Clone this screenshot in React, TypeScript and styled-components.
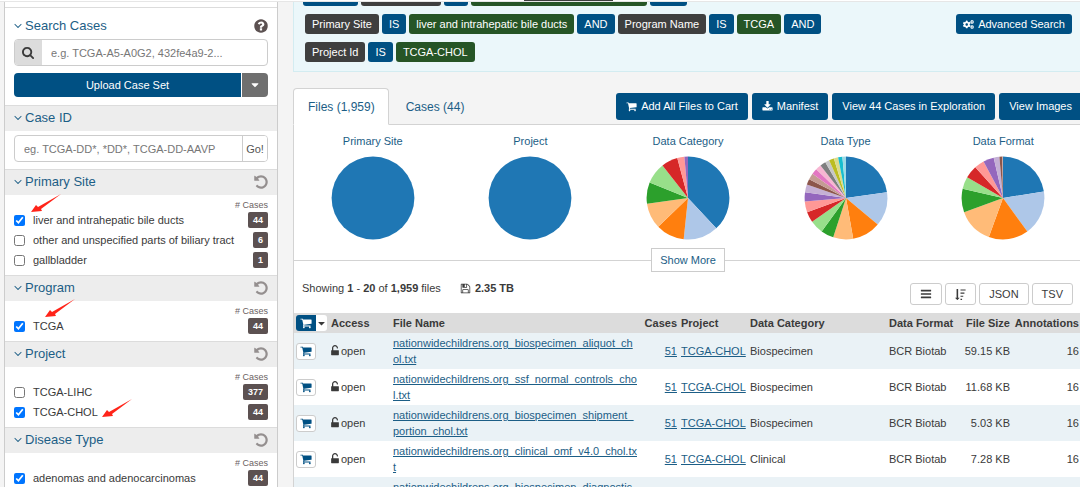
import React from "react";
import styled, { createGlobalStyle, css } from "styled-components";
import { FaCogs } from "react-icons/fa";

const GlobalStyle = createGlobalStyle`
  *, *::before, *::after { box-sizing: border-box; }
  body {
    margin: 0;
    background: #f4f4f4;
    color: #3a3a3a;
    font-family: "Liberation Sans", Arial, sans-serif;
    font-size: 11px;
    line-height: 16px;
  }
  button, input { font: inherit; color: inherit; }
  a { color: #1c5e86; }
`;

const blue = "#005083";
const linkBlue = "#1c5e86";

/* ---------- icons ---------- */

const paths = {
  search:
    "M1152 832q0-185-131.5-316.5t-316.5-131.5-316.5 131.5-131.5 316.5 131.5 316.5 316.5 131.5 316.5-131.5 131.5-316.5zm512 832q0 54-38 91t-90 37q-54 0-90-38l-343-342q-179 124-399 124-143 0-273.5-55.5t-225-150-150-225-55.5-273.5 55.5-273.5 150-225 225-150 273.5-55.5 273.5 55.5 225 150 150 225 55.5 273.5q0 220-124 399l343 343q37 37 37 90z",
  angleDown:
    "M1395 736q0 13-10 23l-466 466q-10 10-23 10t-23-10l-466-466q-10-10-10-23t10-23l50-50q10-10 23-10t23 10l393 393 393-393q10-10 23-10t23 10l50 50q10 10 10 23z",
  question:
    "M1024 1376v-192q0-14-9-23t-23-9h-192q-14 0-23 9t-9 23v192q0 14 9 23t23 9h192q14 0 23-9t9-23zm256-672q0-88-55.5-163t-138.5-116-170-41q-243 0-371 213-15 24 8 42l132 100q7 6 19 6 16 0 25-12 53-68 86-92 34-24 86-24 48 0 85.5 26t37.5 59q0 38-20 61t-68 45q-63 28-115.5 86.5t-52.5 125.5v36q0 14 9 23t23 9h192q14 0 23-9t9-23q0-19 21.5-49.5t54.5-49.5q32-18 49-28.5t46-35 44.5-48 28-60.5 12.5-81zm384 192q0 209-103 385.5t-279.5 279.5-385.5 103-385.5-103-279.5-279.5-103-385.5 103-385.5 279.5-279.5 385.5-103 385.5 103 279.5 279.5 103 385.5z",
  undo:
    "M1664 896q0 156-61 298t-164 245-245 164-298 61q-172 0-327-72.5t-264-204.5q-7-10-6.5-22.5t8.5-20.5l137-138q10-9 25-9 16 2 23 12 73 95 179 147t225 52q104 0 198.5-40.5t163.5-109.5 109.5-163.5 40.5-198.5-40.5-198.5-109.5-163.5-163.5-109.5-198.5-40.5q-98 0-188 35.5t-160 101.5l137 138q31 30 14 69-17 40-59 40h-448q-26 0-45-19t-19-45v-448q0-42 40-59 39-17 69 14l130 129q107-101 244.5-156.5t284.5-55.5q156 0 298 61t245 164 164 245 61 298z",
  cart:
    "M704 1536q0 52-38 90t-90 38-90-38-38-90 38-90 90-38 90 38 38 90zm896 0q0 52-38 90t-90 38-90-38-38-90 38-90 90-38 90 38 38 90zm128-1088v512q0 24-16.5 42.5t-40.5 21.5l-1044 122q13 60 13 70 0 16-24 64h920q26 0 45 19t19 45-19 45-45 19h-1024q-26 0-45-19t-19-45q0-11 8-31.5t16-36 21.5-40 15.5-29.5l-177-823h-204q-26 0-45-19t-19-45 19-45 45-19h256q16 0 28.5 6.5t19.5 15.5 13 24.5 8 26 5.5 29.5 4.5 26h1201q26 0 45 19t19 45z",
  download:
    "M1344 1344q0-26-19-45t-45-19-45 19-19 45 19 45 45 19 45-19 19-45zm256 0q0-26-19-45t-45-19-45 19-19 45 19 45 45 19 45-19 19-45zm128-224v320q0 40-28 68t-68 28h-1472q-40 0-68-28t-28-68v-320q0-40 28-68t68-28h465l135 136q58 56 136 56t136-56l136-136h464q40 0 68 28t28 68zm-325-569q17 41-14 70l-448 448q-18 19-45 19t-45-19l-448-448q-31-29-14-70 17-39 59-39h256v-448q0-26 19-45t45-19h256q26 0 45 19t19 45v448h256q42 0 59 39z",
  save:
    "M512 1536h768v-384h-768v384zm896 0h128v-896q0-14-10-38.5t-20-34.5l-281-281q-10-10-34-20t-39-10v416q0 40-28 68t-68 28h-576q-40 0-68-28t-28-68v-416h-128v1280h128v-416q0-40 28-68t68-28h832q40 0 68 28t28 68v416zm-384-928v-320q0-13-9.5-22.5t-22.5-9.5h-192q-13 0-22.5 9.5t-9.5 22.5v320q0 13 9.5 22.5t22.5 9.5h192q13 0 22.5-9.5t9.5-22.5zm640 32v928q0 40-28 68t-68 28h-1344q-40 0-68-28t-28-68v-1344q0-40 28-68t68-28h928q40 0 88 20t76 48l280 280q28 28 48 76t20 88z",
  bars:
    "M1664 1344v128q0 26-19 45t-45 19h-1408q-26 0-45-19t-19-45v-128q0-26 19-45t45-19h1408q26 0 45 19t19 45zm0-512v128q0 26-19 45t-45 19h-1408q-26 0-45-19t-19-45v-128q0-26 19-45t45-19h1408q26 0 45 19t19 45zm0-512v128q0 26-19 45t-45 19h-1408q-26 0-45-19t-19-45v-128q0-26 19-45t45-19h1408q26 0 45 19t19 45z",
  unlock:
    "M1376 768q40 0 68 28t28 68v576q0 40-28 68t-68 28h-960q-40 0-68-28t-28-68v-576q0-40 28-68t68-28h32v-320q0-185 131.5-316.5t316.5-131.5 316.5 131.5 131.5 316.5q0 26-19 45t-45 19h-64q-26 0-45-19t-19-45q0-106-75-181t-181-75-181 75-75 181v320h736z",
  caret:
    "M1408 704q0 26-19 45l-448 448q-19 19-45 19t-45-19l-448-448q-19-19-19-45t19-45 45-19h896q26 0 45 19t19 45z",
  sortDesc:
    "M736 1440q0 12-10 24l-319 319q-10 9-23 9-12 0-23-9l-320-320q-15-16-7-35 8-20 30-20h192v-1376q0-14 9-23t23-9h192q14 0 23 9t9 23v1376h192q14 0 23 9t9 23zM896 1600h256v192h-256zM896 1088h448v192h-448zM896 576h640v192h-640zM896 64h832v192h-832z",
};

const Svg = styled.svg`
  display: block;
  flex: none;
  fill: currentColor;
`;

type IconProps = { name: keyof typeof paths; size?: number; width?: number; viewBox?: string };

const Icon = ({ name, size = 12, width = size, viewBox = "0 0 1792 1792" }: IconProps) => (
  <Svg width={width} height={size} viewBox={viewBox} aria-hidden="true">
    <path d={paths[name]} />
  </Svg>
);

/* ---------- page frame ---------- */

const Page = styled.div`
  display: flex;
  flex-direction: column;
  height: 100vh;
  overflow: hidden;
`;

const TopEdge = styled.header`
  position: relative;
  flex: none;
  height: 2px;
  background: #fff;
  border-bottom: 1px solid #e6e6e6;
`;

const TopNotch = styled.div`
  position: absolute;
  left: 524px;
  top: -1px;
  width: 89px;
  height: 2px;
  background: #3c3c3c;
`;

const Columns = styled.div`
  display: flex;
  flex: 1;
  gap: 15px;
  padding-left: 4px;
  margin-right: -2px;
  min-height: 0;
`;

/* ---------- sidebar ---------- */

const Sidebar = styled.aside`
  flex: none;
  width: 274px;
  background: #fff;
  border: solid #ccc;
  border-width: 0 1px;
`;

const SearchSection = styled.section`
  margin-top: 5px;
  padding: 5px 9px 8px;
  border-top: 1px solid #dcdcdc;
`;

const FacetHead = styled.div<{ $plain?: boolean }>`
  display: flex;
  align-items: center;
  justify-content: space-between;
  height: 26px;
  color: #948f8f;
  ${(p) =>
    !p.$plain &&
    css`
      padding: 0 9px 1px;
      background: #ededed;
      border-top: 1px solid #dcdcdc;
    `}
`;

const FacetTitle = styled.h2`
  display: flex;
  align-items: center;
  gap: 3px;
  margin: 0;
  color: ${linkBlue};
  font-size: 13px;
  font-weight: 400;
`;

const IconButton = styled.button<{ $dark?: boolean }>`
  padding: 0;
  border: 0;
  background: none;
  color: ${(p) => (p.$dark ? "#5c5151" : "#948f8f")};
`;

const InputGroup = styled.div`
  display: flex;
  height: 27px;
  border: 1px solid #ccc;
  border-radius: 4px;
  background: #fff;
  overflow: hidden;
`;

const InputAddon = styled.label`
  display: flex;
  align-items: center;
  justify-content: center;
  width: 27px;
  background: #dcdcdc;
`;

const TextInput = styled.input`
  flex: 1;
  min-width: 0;
  padding: 0 9px;
  border: 0;
  background: none;
  &::placeholder {
    color: #777;
    opacity: 1;
  }
`;

const GoButton = styled.button`
  width: 25px;
  padding: 0;
  border: 0;
  border-left: 1px solid #ccc;
  background: #fff;
  color: #555;
`;

const UploadRow = styled.div`
  display: flex;
  gap: 1px;
  height: 24px;
  margin-top: 7px;
`;

const UploadButton = styled.button`
  flex: 1;
  padding: 0;
  border: 0;
  border-radius: 4px 0 0 4px;
  background: ${blue};
  color: #fff;
`;

const UploadMenu = styled.button`
  display: flex;
  align-items: center;
  justify-content: center;
  width: 26px;
  padding: 0;
  border: 0;
  border-radius: 0 4px 4px 0;
  background: #6f6f6f;
  color: #fff;
`;

const CaseIdBody = styled.div`
  padding: 4px 9px 7px;
`;

const FacetBody = styled.div`
  padding: 4px 9px 5px;
`;

const CasesLabel = styled.div`
  height: 11px;
  color: #6b6262;
  font-size: 9px;
  line-height: 12px;
  text-align: right;
`;

const FacetRow = styled.div`
  position: relative;
  display: flex;
  align-items: center;
  justify-content: space-between;
  height: 20px;
`;

const FacetOption = styled.label`
  display: flex;
  align-items: center;
  gap: 8px;
`;

const Checkbox = styled.input`
  width: 11px;
  height: 11px;
  margin: 0;
`;

const Badge = styled.span`
  padding: 0 5px;
  border-radius: 2px;
  background: #5c5151;
  color: #fff;
  font-size: 9px;
  font-weight: 700;
`;

const Arrow = styled.svg<{ $x: number; $y: number }>`
  position: absolute;
  left: ${(p) => p.$x}px;
  top: ${(p) => p.$y}px;
  pointer-events: none;
`;

type Option = { label: string; count: number; checked?: boolean; arrow?: [number, number] };

const facets: { title: string; options: Option[] }[] = [
  {
    title: "Primary Site",
    options: [
      { label: "liver and intrahepatic bile ducts", count: 44, checked: true, arrow: [16, -17] },
      { label: "other and unspecified parts of biliary tract", count: 6 },
      { label: "gallbladder", count: 1 },
    ],
  },
  { title: "Program", options: [{ label: "TCGA", count: 44, checked: true, arrow: [30, -18] }] },
  {
    title: "Project",
    options: [
      { label: "TCGA-LIHC", count: 377 },
      { label: "TCGA-CHOL", count: 44, checked: true, arrow: [87, -4] },
    ],
  },
  {
    title: "Disease Type",
    options: [{ label: "adenomas and adenocarcinomas", count: 44, checked: true }],
  },
];

const Title = ({ children }: { children: React.ReactNode }) => (
  <FacetTitle>
    <Icon name="angleDown" size={8} viewBox="346 400 1100 1100" />
    {children}
  </FacetTitle>
);

const Facet = ({ title, options }: { title: string; options: Option[] }) => (
  <section>
    <FacetHead>
      <Title>{title}</Title>
      <IconButton aria-label={`Reset ${title}`}>
        <Icon name="undo" size={14} viewBox="100 100 1592 1592" />
      </IconButton>
    </FacetHead>
    <FacetBody>
      <CasesLabel># Cases</CasesLabel>
      {options.map((o) => (
        <FacetRow key={o.label}>
          <FacetOption>
            <Checkbox type="checkbox" defaultChecked={o.checked} />
            {o.label}
          </FacetOption>
          <Badge>{o.count}</Badge>
          {o.arrow && (
            <Arrow $x={o.arrow[0]} $y={o.arrow[1]} width="32" height="20" aria-hidden="true">
              <path d="M1 19 L6 12 L8 14 L31 1 L11 16 L12 18 Z" fill="#ff2419" />
            </Arrow>
          )}
        </FacetRow>
      ))}
    </FacetBody>
  </section>
);

/* ---------- query bar ---------- */

const Main = styled.main`
  flex: 1;
  min-width: 0;
`;

const Query = styled.section`
  display: flex;
  justify-content: space-between;
  align-items: flex-start;
  padding: 0 10px 9px 11px;
  background: #ebf7fa;
  border: solid #d3ecf1;
  border-width: 0 0 1px 1px;
`;

const QueryRows = styled.div`
  display: flex;
  flex-direction: column;
  gap: 8px;
`;

const QueryRow = styled.div<{ $cut?: boolean }>`
  display: flex;
  gap: 3px;
  ${(p) =>
    p.$cut &&
    css`
      align-items: flex-end;
      height: 4px;
      margin-left: -2px;
      overflow: hidden;
    `}
`;

const tagColors = { field: "#3f3f3f", op: blue, value: "#265526" };

const Tag = styled.span<{ $kind: keyof typeof tagColors; $width?: number }>`
  flex: none;
  height: 20px;
  width: ${(p) => (p.$width ? `${p.$width}px` : "auto")};
  padding: 0 7px;
  border-radius: 3px;
  background: ${(p) => tagColors[p.$kind]};
  color: #fff;
  line-height: 20px;
  white-space: nowrap;
`;

const AdvancedSearch = styled.button`
  display: flex;
  align-items: center;
  gap: 4px;
  height: 20px;
  margin-top: 12px;
  padding: 0 7px;
  border: 0;
  border-radius: 3px;
  background: ${blue};
  color: #fff;
  white-space: nowrap;
`;

/* ---------- tabs ---------- */

const TabBar = styled.div`
  display: flex;
  justify-content: space-between;
  margin-top: 16px;
`;

const Tabs = styled.nav`
  display: flex;
`;

const Tab = styled.a<{ $active?: boolean }>`
  height: 37px;
  margin-bottom: -1px;
  padding: 0 16px;
  border: 1px solid transparent;
  border-radius: 4px 4px 0 0;
  color: ${linkBlue};
  font-size: 12px;
  line-height: 36px;
  text-decoration: none;
  white-space: nowrap;
  ${(p) =>
    p.$active &&
    css`
      position: relative;
      padding: 0 13px 0 14px;
      background: #fff;
      border-color: #d3d3d3;
      border-bottom-color: #fff;
    `}
`;

const Actions = styled.div`
  display: flex;
  align-items: center;
  gap: 4px;
`;

const ActionButton = styled.button`
  display: flex;
  align-items: center;
  gap: 4px;
  height: 27px;
  padding: 0 10px;
  border: 0;
  border-radius: 3px;
  background: ${blue};
  color: #fff;
  white-space: nowrap;
`;

/* ---------- charts ---------- */

const Panel = styled.section`
  background: #fff;
  border: solid #d3d3d3;
  border-width: 1px 0 0 1px;
`;

const Charts = styled.div`
  display: grid;
  grid-template-columns: repeat(5, 1fr);
  padding-top: 8px;
`;

const Chart = styled.figure`
  display: flex;
  flex-direction: column;
  align-items: center;
  gap: 7px;
  margin: 0;
  color: ${linkBlue};
`;

const palette = [
  "#1f77b4", "#aec7e8", "#ff7f0e", "#ffbb78", "#2ca02c", "#98df8a", "#d62728", "#ff9896",
  "#9467bd", "#c5b0d5", "#8c564b", "#c49c94", "#e377c2", "#f7b6d2", "#7f7f7f", "#c7c7c7",
  "#bcbd22", "#dbdb8d", "#17becf", "#9edae5",
];

/* Each pie lists the angle, clockwise from the top, at which every slice ends. */
const pies: { title: string; ends: number[] }[] = [
  { title: "Primary Site", ends: [360] },
  { title: "Project", ends: [360] },
  { title: "Data Category", ends: [137, 186, 226, 262, 292, 322, 345, 355, 360] },
  {
    title: "Data Type",
    ends: [82, 130, 170, 198, 216, 235, 250, 265, 278, 289, 297, 306, 314, 322, 330, 336, 343, 349, 355, 360],
  },
  { title: "Data Format", ends: [81, 144, 200, 250, 283, 300, 318, 332, 347, 355, 359, 360] },
];

const R = 41.4;
const point = (deg: number) => {
  const a = (deg * Math.PI) / 180;
  return `${42 + R * Math.sin(a)} ${42 - R * Math.cos(a)}`;
};

const Pie = ({ ends }: { ends: number[] }) => (
  <svg width="84" height="84" viewBox="0 0 84 84" aria-hidden="true">
    {ends.length === 1 ? (
      <circle cx="42" cy="42" r={R} fill={palette[0]} />
    ) : (
      ends.map((end, i) => {
        const start = i ? ends[i - 1] : 0;
        return (
          <path
            key={end}
            d={`M42 42 L${point(start)} A${R} ${R} 0 ${end - start > 180 ? 1 : 0} 1 ${point(end)} Z`}
            fill={palette[i]}
          />
        );
      })
    )}
  </svg>
);

const MoreDivider = styled.div`
  display: flex;
  align-items: center;
  margin-top: 8px;
  &::before,
  &::after {
    content: "";
    flex: 1;
    height: 1px;
    background: #d3d3d3;
  }
`;

const ShowMore = styled.button`
  height: 24px;
  padding: 0 8px;
  border: 1px solid #ccc;
  background: #fff;
  color: ${linkBlue};
`;

/* ---------- table ---------- */

const TableBar = styled.div`
  display: flex;
  justify-content: space-between;
  align-items: flex-start;
  padding: 8px 9px 8px 8px;
`;

const Summary = styled.div`
  display: flex;
  align-items: center;
  gap: 19px;
`;

const Size = styled.strong`
  display: flex;
  align-items: center;
  gap: 4px;
`;

const Tools = styled.div`
  display: flex;
  gap: 3px;
  padding-top: 3px;
`;

const ToolButton = styled.button`
  display: flex;
  align-items: center;
  justify-content: center;
  height: 22px;
  padding: 0 9px;
  border: 1px solid #ccc;
  border-radius: 3px;
  background: #fff;
`;

const Table = styled.table`
  width: 100%;
  table-layout: fixed;
  border-collapse: collapse;
`;

const Col = styled.col<{ $w?: number }>`
  width: ${(p) => (p.$w ? `${p.$w}px` : "auto")};
`;

const HeadRow = styled.tr`
  height: 20px;
  background: #dcdcdc;
`;

const BodyRow = styled.tr`
  height: 36px;
  &:nth-child(odd) {
    background: #eaf2f6;
  }
`;

const cell = css<{ $right?: boolean }>`
  padding: 0 2px;
  text-align: ${(p) => (p.$right ? "right" : "left")};
  white-space: nowrap;
  &:last-child {
    padding: 0 3px 0 0;
  }
`;

const Th = styled.th<{ $right?: boolean }>`
  ${cell}
`;

const Td = styled.td<{ $right?: boolean }>`
  ${cell}
`;

const FileLink = styled.a`
  display: block;
  white-space: normal;
  word-break: break-all;
`;

const Access = styled.span`
  display: flex;
  align-items: center;
  gap: 2px;
`;

const CartButton = styled.button`
  display: flex;
  align-items: center;
  justify-content: center;
  width: 20px;
  height: 17px;
  padding: 0;
  border: 1px solid #ccc;
  border-radius: 3px;
  background: #fff;
  color: ${blue};
`;

const CartMenu = styled.div`
  display: flex;
  height: 16px;
`;

const CartAll = styled.button`
  display: flex;
  align-items: center;
  justify-content: center;
  width: 20px;
  padding: 0;
  border: 0;
  border-radius: 3px 0 0 3px;
  background: ${blue};
  color: #fff;
`;

const CartCaret = styled.button`
  display: flex;
  align-items: center;
  justify-content: center;
  width: 11px;
  padding: 0;
  border: 0;
  border-radius: 0 3px 3px 0;
  background: #fff;
`;

const files = [
  ["nationwidechildrens.org_biospecimen_aliquot_chol.txt", "Biospecimen", "59.15 KB"],
  ["nationwidechildrens.org_ssf_normal_controls_chol.txt", "Biospecimen", "11.68 KB"],
  ["nationwidechildrens.org_biospecimen_shipment_portion_chol.txt", "Biospecimen", "5.03 KB"],
  ["nationwidechildrens.org_clinical_omf_v4.0_chol.txt", "Clinical", "7.28 KB"],
  ["nationwidechildrens.org_biospecimen_diagnostic_slides_chol.txt", "Biospecimen", "5.61 KB"],
];

export default function App() {
  return (
    <Page>
      <GlobalStyle />
      <TopEdge>
        <TopNotch />
      </TopEdge>
      <Columns>
        <Sidebar>
          <SearchSection>
            <FacetHead $plain>
              <Title>Search Cases</Title>
              <IconButton $dark aria-label="Help">
                <Icon name="question" size={14} viewBox="100 100 1592 1592" />
              </IconButton>
            </FacetHead>
            <InputGroup>
              <InputAddon htmlFor="case-search" aria-label="Search cases">
                <Icon name="search" size={13} />
              </InputAddon>
              <TextInput id="case-search" placeholder="e.g. TCGA-A5-A0G2, 432fe4a9-2..." />
            </InputGroup>
            <UploadRow>
              <UploadButton>Upload Case Set</UploadButton>
              <UploadMenu aria-label="More upload options">
                <Icon name="caret" size={12} />
              </UploadMenu>
            </UploadRow>
          </SearchSection>
          <section>
            <FacetHead>
              <Title>Case ID</Title>
            </FacetHead>
            <CaseIdBody>
              <InputGroup>
                <TextInput aria-label="Case ID" placeholder="eg. TCGA-DD*, *DD*, TCGA-DD-AAVP" />
                <GoButton>Go!</GoButton>
              </InputGroup>
            </CaseIdBody>
          </section>
          {facets.map((f) => (
            <Facet key={f.title} {...f} />
          ))}
        </Sidebar>

        <Main>
          <Query>
            <QueryRows>
              <QueryRow $cut aria-hidden="true">
                <Tag $kind="op" $width={55} />
                <Tag $kind="field" $width={80} />
                <Tag $kind="op" $width={24} />
                <Tag $kind="value" $width={176} />
                <Tag $kind="op" $width={37} />
              </QueryRow>
              <QueryRow>
                <Tag $kind="field">Primary Site</Tag>
                <Tag $kind="op">IS</Tag>
                <Tag $kind="value">liver and intrahepatic bile ducts</Tag>
                <Tag $kind="op">AND</Tag>
                <Tag $kind="field">Program Name</Tag>
                <Tag $kind="op">IS</Tag>
                <Tag $kind="value">TCGA</Tag>
                <Tag $kind="op">AND</Tag>
              </QueryRow>
              <QueryRow>
                <Tag $kind="field">Project Id</Tag>
                <Tag $kind="op">IS</Tag>
                <Tag $kind="value">TCGA-CHOL</Tag>
              </QueryRow>
            </QueryRows>
            <AdvancedSearch>
              <FaCogs size={11} aria-hidden="true" />
              Advanced Search
            </AdvancedSearch>
          </Query>

          <TabBar>
            <Tabs>
              <Tab $active href="#files">Files (1,959)</Tab>
              <Tab href="#cases">Cases (44)</Tab>
            </Tabs>
            <Actions>
              <ActionButton>
                <Icon name="cart" size={11} />
                Add All Files to Cart
              </ActionButton>
              <ActionButton>
                <Icon name="download" size={11} />
                Manifest
              </ActionButton>
              <ActionButton>View 44 Cases in Exploration</ActionButton>
              <ActionButton>View Images</ActionButton>
            </Actions>
          </TabBar>

          <Panel>
            <Charts>
              {pies.map((p) => (
                <Chart key={p.title}>
                  <figcaption>{p.title}</figcaption>
                  <Pie ends={p.ends} />
                </Chart>
              ))}
            </Charts>
            <MoreDivider>
              <ShowMore>Show More</ShowMore>
            </MoreDivider>
            <TableBar>
              <Summary>
                <span>
                  Showing <b>1</b> - <b>20</b> of <b>1,959</b> files
                </span>
                <Size>
                  <Icon name="save" size={11} />
                  2.35 TB
                </Size>
              </Summary>
              <Tools>
                <ToolButton aria-label="Arrange columns">
                  <Icon name="bars" size={12} />
                </ToolButton>
                <ToolButton aria-label="Sort">
                  <Icon name="sortDesc" size={11} />
                </ToolButton>
                <ToolButton>JSON</ToolButton>
                <ToolButton>TSV</ToolButton>
              </Tools>
            </TableBar>
            <Table>
              <colgroup>
                <Col $w={35} />
                <Col $w={62} />
                <Col />
                <Col $w={39} />
                <Col $w={69} />
                <Col $w={139} />
                <Col $w={71} />
                <Col $w={54} />
                <Col $w={70} />
              </colgroup>
              <thead>
                <HeadRow>
                  <Th>
                    <CartMenu>
                      <CartAll aria-label="Add all to cart">
                        <Icon name="cart" size={12} />
                      </CartAll>
                      <CartCaret aria-label="Cart options">
                        <Icon name="caret" size={11} />
                      </CartCaret>
                    </CartMenu>
                  </Th>
                  <Th>Access</Th>
                  <Th>File Name</Th>
                  <Th $right>Cases</Th>
                  <Th>Project</Th>
                  <Th>Data Category</Th>
                  <Th>Data Format</Th>
                  <Th $right>File Size</Th>
                  <Th $right>Annotations</Th>
                </HeadRow>
              </thead>
              <tbody>
                {files.map(([name, category, size]) => (
                  <BodyRow key={name}>
                    <Td>
                      <CartButton aria-label="Add to cart">
                        <Icon name="cart" size={12} />
                      </CartButton>
                    </Td>
                    <Td>
                      <Access>
                        <Icon name="unlock" size={12} width={8} viewBox="320 0 1152 1792" />
                        open
                      </Access>
                    </Td>
                    <Td>
                      <FileLink href="#file">{name}</FileLink>
                    </Td>
                    <Td $right>
                      <a href="#cases">51</a>
                    </Td>
                    <Td>
                      <a href="#project">TCGA-CHOL</a>
                    </Td>
                    <Td>{category}</Td>
                    <Td>BCR Biotab</Td>
                    <Td $right>{size}</Td>
                    <Td $right>16</Td>
                  </BodyRow>
                ))}
              </tbody>
            </Table>
          </Panel>
        </Main>
      </Columns>
    </Page>
  );
}
